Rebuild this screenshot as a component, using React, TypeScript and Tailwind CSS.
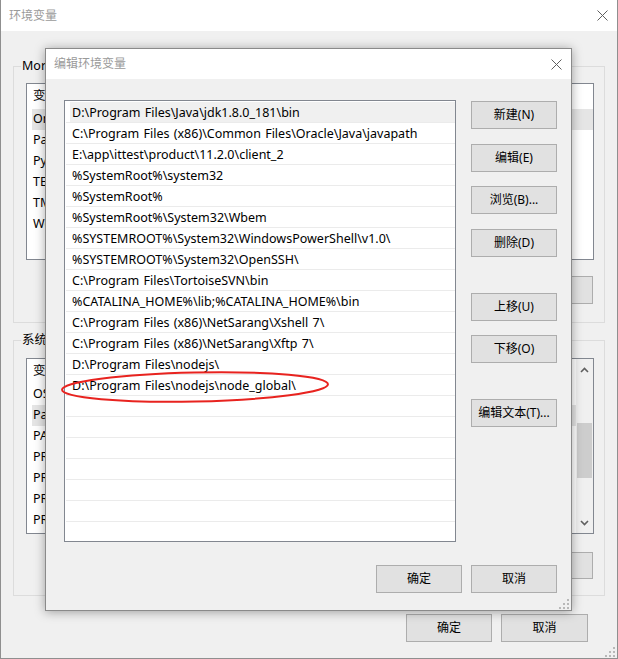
import React from 'react';

const font = "font-['Noto_Sans','Noto_Sans_CJK_SC',sans-serif]";

const paths = [
  'D:\\Program Files\\Java\\jdk1.8.0_181\\bin',
  'C:\\Program Files (x86)\\Common Files\\Oracle\\Java\\javapath',
  'E:\\app\\ittest\\product\\11.2.0\\client_2',
  '%SystemRoot%\\system32',
  '%SystemRoot%',
  '%SystemRoot%\\System32\\Wbem',
  '%SYSTEMROOT%\\System32\\WindowsPowerShell\\v1.0\\',
  '%SYSTEMROOT%\\System32\\OpenSSH\\',
  'C:\\Program Files\\TortoiseSVN\\bin',
  '%CATALINA_HOME%\\lib;%CATALINA_HOME%\\bin',
  'C:\\Program Files (x86)\\NetSarang\\Xshell 7\\',
  'C:\\Program Files (x86)\\NetSarang\\Xftp 7\\',
  'D:\\Program Files\\nodejs\\',
  'D:\\Program Files\\nodejs\\node_global\\',
];

const userVars = ['OneDrive', 'Path', 'PyCharm Community Edition', 'TEMP', 'TMP', 'WebStorm'];
const sysVars = ['OS', 'Path', 'PATHEXT', 'PROCESSOR_ARCHITECTURE', 'PROCESSOR_IDENTIFIER', 'PROCESSOR_LEVEL', 'PROCESSOR_REVISION'];

function CloseX() {
  return (
    <svg width="11" height="11" viewBox="0 0 11 11">
      <path d="M0.5 0.5L10.5 10.5M10.5 0.5L0.5 10.5" stroke="#5f5f5f" strokeWidth="1" />
    </svg>
  );
}

function Grip() {
  const dots = [
    [8, 0],
    [4, 4], [8, 4],
    [0, 8], [4, 8], [8, 8],
  ];
  return (
    <svg width="10" height="10" viewBox="0 0 10 10">
      {dots.map(([x, y], i) => (
        <rect key={i} x={x} y={y} width="2" height="2" fill="#b8b8b8" />
      ))}
    </svg>
  );
}

function Chevron({ up }: { up?: boolean }) {
  return (
    <svg width="9" height="6" viewBox="0 0 9 6">
      <path d={up ? 'M1 5L4.5 1.5L8 5' : 'M1 1L4.5 4.5L8 1'} stroke="#606060" strokeWidth="1.6" fill="none" />
    </svg>
  );
}

function Btn({ children, className = '' }: { children: React.ReactNode; className?: string }) {
  return (
    <div className={`flex shrink-0 items-center justify-center border border-[#adadad] bg-[#e1e1e1] text-[12px] text-black ${className}`}>
      {children}
    </div>
  );
}

function BgList({ rows, selected, scroll }: { rows: string[]; selected: number; scroll?: boolean }) {
  return (
    <div className="flex h-full border border-[#828790] bg-white">
      <div className="flex-1 overflow-hidden">
        <div className="flex h-[25px] items-center pl-[6px] text-[12.5px] text-black">变量</div>
        {rows.map((r, i) => (
          <div key={r} className={`ml-[5px] flex h-[21px] items-center pl-[1px] text-[12.5px] text-black ${i === selected ? 'bg-[#e5e5e5]' : ''}`}>
            {r}
          </div>
        ))}
      </div>
      {scroll && (
        <div className="flex w-[17px] flex-col bg-[#f0f0f0]">
          <div className="flex h-[22px] items-center justify-center">
            <Chevron up />
          </div>
          <div className="mx-auto mt-[42px] h-[55px] w-[15px] bg-[#cdcdcd]" />
          <div className="flex-1" />
          <div className="flex h-[20px] items-center justify-center">
            <Chevron />
          </div>
        </div>
      )}
    </div>
  );
}

function GroupBox({ label, children, className = '' }: { label: string; children: React.ReactNode; className?: string }) {
  return (
    <div className={`relative border border-[#dcdcdc] ${className}`}>
      <span className="absolute -top-[9px] left-[7px] bg-[#f0f0f0] px-[1px] text-[12.5px] leading-[16px] text-black">{label}</span>
      {children}
    </div>
  );
}

export default function App() {
  return (
    <div className={`relative h-[659px] w-[618px] overflow-hidden bg-[#f0f0f0] ${font}`}>
      {/* 环境变量 main window */}
      <div className="flex h-full flex-col border-x border-b border-[#8f8f8f]">
        <div className="flex h-[31px] shrink-0 items-center justify-between bg-white pl-[8px] pr-[9px]">
          <span className="text-[12px] text-[#9a9a9a]">环境变量</span>
          <CloseX />
        </div>
        <div className="flex flex-col px-[12px]">
          <GroupBox label="Moriarty 的用户变量(U)" className="mt-[35px] pb-[18px] pl-[12px] pr-[10px] pt-[16px]">
            <div className="h-[177px]">
              <BgList rows={userVars} selected={0} />
            </div>
            <div className="mt-[16px] flex justify-end gap-[10px] pr-[1px]">
              <Btn className="h-[28px] w-[86px]">新建(N)...</Btn>
              <Btn className="h-[28px] w-[86px]">编辑(E)...</Btn>
              <Btn className="h-[28px] w-[86px]">删除(D)</Btn>
            </div>
          </GroupBox>
          <GroupBox label="系统变量(S)" className="mt-[17px] pb-[16px] pl-[12px] pr-[10px] pt-[17px]">
            <div className="h-[176px]">
              <BgList rows={sysVars} selected={1} scroll />
            </div>
            <div className="mt-[18px] flex justify-end gap-[10px] pr-[1px]">
              <Btn className="h-[27px] w-[86px]">新建(W)...</Btn>
              <Btn className="h-[27px] w-[86px]">编辑(I)...</Btn>
              <Btn className="h-[27px] w-[86px]">删除(L)</Btn>
            </div>
          </GroupBox>
          <div className="mr-[17px] mt-[18px] flex justify-end gap-[9px]">
            <Btn className="h-[28px] w-[86px]">确定</Btn>
            <Btn className="h-[28px] w-[87px]">取消</Btn>
          </div>
        </div>
      </div>
      <div className="absolute bottom-[2px] right-[3px]">
        <Grip />
      </div>

      {/* 编辑环境变量 dialog */}
      <div className="absolute left-[45px] top-[48px] flex h-[563px] w-[527px] flex-col border border-[#8a8a8a] bg-[#f0f0f0] shadow-[0_1px_10px_rgba(0,0,0,0.35)]">
        <div className="flex h-[30px] shrink-0 items-center justify-between bg-white pl-[8px] pr-[9px]">
          <span className="text-[12px] text-[#9a9a9a]">编辑环境变量</span>
          <CloseX />
        </div>
        <div className="flex pl-[18px] pr-[14px] pt-[21px]">
          <div className="h-[442px] w-[392px] overflow-hidden border border-[#828790] bg-white pt-[1px]">
            {Array.from({ length: 21 }).map((_, i) => (
              <div key={i} className="ml-[1px] h-[21px] border-b border-[#ebebeb]">
                <div className={`ml-[4px] flex h-full items-center whitespace-nowrap pl-[2px] pt-[2px] text-[12.5px] text-black [word-spacing:1px] ${i === 0 ? 'bg-[#f0f0f0]' : ''}`}>
                  {paths[i] ?? ''}
                </div>
              </div>
            ))}
          </div>
          <div className="ml-[15px] flex flex-col pt-[1px]">
            <Btn className="h-[28px] w-[86px]">新建(N)</Btn>
            <Btn className="mt-[15px] h-[28px] w-[86px]">编辑(E)</Btn>
            <Btn className="mt-[14px] h-[28px] w-[86px]">浏览(B)...</Btn>
            <Btn className="mt-[15px] h-[28px] w-[86px]">删除(D)</Btn>
            <Btn className="mt-[36px] h-[28px] w-[86px]">上移(U)</Btn>
            <Btn className="mt-[14px] h-[28px] w-[86px]">下移(O)</Btn>
            <Btn className="mt-[36px] h-[28px] w-[86px]">编辑文本(T)...</Btn>
          </div>
        </div>
        <div className="mt-[23px] flex justify-end gap-[9px] pr-[14px]">
          <Btn className="h-[28px] w-[86px]">确定</Btn>
          <Btn className="h-[28px] w-[86px]">取消</Btn>
        </div>
        <div className="absolute bottom-[1px] right-[2px]">
          <Grip />
        </div>
      </div>

      {/* red annotation ellipse */}
      <svg className="absolute left-[58px] top-[367px]" width="276" height="40" viewBox="0 0 276 40">
        <ellipse cx="137" cy="20" rx="133" ry="14.5" transform="rotate(-1.2 137 20)" fill="none" stroke="#e8231f" strokeWidth="2" />
      </svg>
    </div>
  );
}
